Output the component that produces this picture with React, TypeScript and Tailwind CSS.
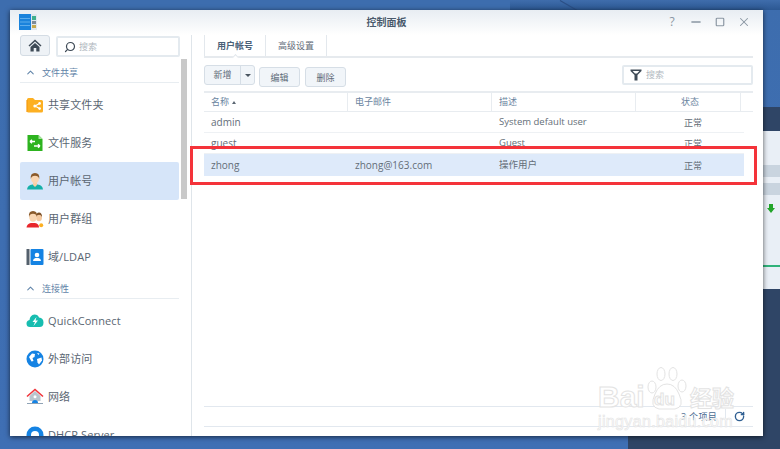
import type { ReactNode } from "react";
import { ChevronUp, Minus, RotateCw, Search, Square, X } from "lucide-react";

const FolderIcon = () => (
  <svg viewBox="0 0 18 18" className="w-[18px] h-[18px]">
    <path d="M1 3.5 Q1 2 2.5 2 H7 L9 4 H15.5 Q17 4 17 5.5 V15 Q17 16.5 15.5 16.5 H2.5 Q1 16.5 1 15 Z" fill="#fdb022" />
    <path d="M1 4 V16" stroke="#f59a0c" strokeWidth="1.2" />
    <path d="M9 10 L13.5 7.5 M9 10 L13.5 12.5" stroke="#fff" strokeWidth="1.1" />
    <circle cx="8.8" cy="10" r="1.5" fill="#fff" />
    <circle cx="13.6" cy="7.4" r="1.3" fill="#fff" />
    <circle cx="13.6" cy="12.6" r="1.3" fill="#fff" />
  </svg>
);

const FileServiceIcon = () => (
  <svg viewBox="0 0 18 18" className="w-[18px] h-[18px]">
    <path d="M1.5 1 H12.5 L16.5 5 V17 H1.5 Z" fill="#2db31f" />
    <path d="M12.5 1 V5 H16.5 Z" fill="#a5e29c" />
    <path d="M4 7.5 H9 M4 7.5 L6 5.8 M4 7.5 L6 9.2" stroke="#fff" strokeWidth="1.4" fill="none" />
    <path d="M14 12 H8 M14 12 L12 10.3 M14 12 L12 13.7" stroke="#fff" strokeWidth="1.4" fill="none" />
  </svg>
);

const UserIcon = () => (
  <svg viewBox="0 0 18 18" className="w-[18px] h-[18px]">
    <path d="M1 17.5 Q1.5 13 6.5 12.5 H11.5 Q16.5 13 17 17.5 Z" fill="#14b0a8" />
    <path d="M7 10 H11 V13 L9 15 L7 13 Z" fill="#f7cfa6" />
    <ellipse cx="9" cy="6.5" rx="4" ry="5" fill="#f9d6b2" />
    <path d="M4.8 7 Q4 1 9 1 Q14 1 13.2 7 Q12.5 3.8 9 3.8 Q5.5 3.8 4.8 7 Z" fill="#8a5a2b" />
  </svg>
);

const GroupIcon = () => (
  <svg viewBox="0 0 18 18" className="w-[18px] h-[18px]">
    <ellipse cx="13" cy="7.5" rx="3" ry="3.8" fill="#f4c9a0" />
    <path d="M10 7 Q10 2.5 13 2.5 Q16 2.5 16 7 Q15 4.8 13 4.8 Q11 4.8 10 7 Z" fill="#7b4f26" />
    <path d="M0.5 17.5 Q1 13.5 5 13 H9 Q13 13.5 13 17.5 Z" fill="#e8272c" />
    <ellipse cx="7" cy="7" rx="3.9" ry="4.8" fill="#f9d6b2" />
    <path d="M3 7 Q2.2 1 7 1 Q11.8 1 11 7 Q10.3 3.8 7 3.8 Q3.7 3.8 3 7 Z" fill="#8a5a2b" />
    <circle cx="15.2" cy="15.2" r="2" fill="#fdb022" />
  </svg>
);

const LdapIcon = () => (
  <svg viewBox="0 0 18 18" className="w-[18px] h-[18px]">
    <rect x="0.5" y="1" width="3" height="16" fill="#54606c" />
    <rect x="4.5" y="1" width="13" height="16" rx="1" fill="#1583e3" />
    <circle cx="11" cy="7" r="2.3" fill="#fff" />
    <path d="M7 13 Q7 10.4 9.5 10 H12.5 Q15 10.4 15 13 Z" fill="#fff" />
  </svg>
);

const QuickConnectIcon = () => (
  <svg viewBox="0 0 18 18" className="w-[18px] h-[18px]">
    <path d="M4 15 Q0.5 15 0.5 11.5 Q0.5 8.5 3.5 8 Q4 3 8.5 2.5 Q12 2.5 13 5.5 Q17.5 6 17.5 10.5 Q17.5 15 13.5 15 Z" fill="#17bdb0" />
    <path d="M10.5 5 L6.5 10 H9 L7.5 14 L12 8.5 H9.5 Z" fill="#fff" />
  </svg>
);

const GlobeIcon = () => (
  <svg viewBox="0 0 18 18" className="w-[18px] h-[18px]">
    <circle cx="9" cy="9" r="8.5" fill="#1583e3" />
    <path d="M3 7 L6 3.5 L9 4 L8.5 7 L6.5 8 L7.5 11 L5.5 11.5 Z" fill="#fff" />
    <path d="M11 9 L15.5 7.5 L16 10.5 L13 14.5 L11.5 12.5 Z" fill="#fff" />
    <path d="M11 3 L13.5 3.5 L12.5 5 Z" fill="#fff" />
  </svg>
);

const NetworkIcon = () => (
  <svg viewBox="0 0 18 18" className="w-[18px] h-[18px]">
    <path d="M3.5 8 L9 3 L14.5 8 V13 H3.5 Z" fill="#b9c4ce" />
    <path d="M1 8.5 L9 1.5 L17 8.5" fill="none" stroke="#f0353b" strokeWidth="1.6" />
    <circle cx="9" cy="8.8" r="1.5" fill="#fff" />
    <path d="M6 15 Q6 12 9 12 Q12 12 12 15 Z" fill="#1583e3" />
    <path d="M1 15.5 H17" stroke="#8fa3b5" strokeWidth="1" />
  </svg>
);

const DhcpIcon = () => (
  <svg viewBox="0 0 18 18" className="w-[18px] h-[18px]">
    <circle cx="9" cy="9" r="8.5" fill="#1583e3" />
    <circle cx="9" cy="9" r="4" fill="#fff" />
  </svg>
);

type NavItem = { label: string; icon: ReactNode; active?: boolean };

const shareItems: NavItem[] = [
  { label: "共享文件夹", icon: <FolderIcon /> },
  { label: "文件服务", icon: <FileServiceIcon /> },
  { label: "用户帐号", icon: <UserIcon />, active: true },
  { label: "用户群组", icon: <GroupIcon /> },
  { label: "域/LDAP", icon: <LdapIcon /> },
];

const connectItems: NavItem[] = [
  { label: "QuickConnect", icon: <QuickConnectIcon /> },
  { label: "外部访问", icon: <GlobeIcon /> },
  { label: "网络", icon: <NetworkIcon /> },
  { label: "DHCP Server", icon: <DhcpIcon /> },
];

const rows = [
  { name: "admin", email: "", desc: "System default user", selected: false },
  { name: "guest", email: "", desc: "Guest", selected: false },
  { name: "zhong", email: "zhong@163.com", desc: "操作用户", selected: true },
];

function NavRow({ item }: { item: NavItem }) {
  return (
    <div
      className={`flex items-center gap-[4px] h-[38px] pl-[6px] shrink-0 rounded-[2px] text-[11px] tracking-[0.1px] text-[#5a6672] ${
        item.active ? "bg-[#d6e5f9] text-[#4d6a8c]" : ""
      }`}
    >
      {item.icon}
      <span>{item.label}</span>
    </div>
  );
}

function SectionHeader({ label }: { label: string }) {
  return (
    <div className="flex items-center gap-[6px] h-[23px] pt-[3px] pl-[5px] border-b border-[#e8edf1] text-[9px] text-[#5f83a8] shrink-0">
      <ChevronUp className="w-[11px] h-[11px]" strokeWidth={2.2} />
      <span>{label}</span>
    </div>
  );
}

function ToolButton({ label }: { label: string }) {
  return (
    <button className="w-[41px] h-[20px] rounded-[3px] border border-[#d6dee6] bg-[#f1f5f9] text-[9px] text-[#5f6b78]">
      {label}
    </button>
  );
}

export default function App() {
  return (
    <div className="relative w-[780px] h-[449px] overflow-hidden bg-gradient-to-b from-[#3d6dae] to-[#3f6fb4] font-['Open_Sans','Noto_Sans_CJK_SC',sans-serif]">
      {/* Desktop behind the window */}
      <div className="absolute right-0 top-0 w-[270px] h-[10px] bg-gradient-to-b from-[#3f6dac] to-[#2c5893]" />
      <div className="absolute left-[560px] top-0 w-[24px] h-[1px] rotate-[30deg] origin-left bg-[#2b4f85]" />
      <div className="absolute left-[628px] top-[107px] w-[152px] h-[342px] bg-[#2f4566] flex flex-col pt-[24px]">
        <div className="h-[158px] bg-[#e9eff6] flex flex-col pt-[34px] gap-[6px] pl-[135px]">
          <div className="h-[12px] bg-[#c9d4df]" />
          <div className="h-[12px] bg-[#c9d4df]" />
          <svg viewBox="0 0 8 9" className="mt-[3px] ml-[4px] w-[8px] h-[9px]">
            <path d="M2 0 H6 V4 H8 L4 9 L0 4 H2 Z" fill="#22a52a" />
          </svg>
          <div className="mt-auto h-[2px] bg-[#30b27a]" />
          <div className="h-[16px]" />
        </div>
      </div>

      {/* Control panel window */}
      <div className="absolute left-[10px] top-[10px] w-[753px] h-[426px] bg-white flex flex-col overflow-hidden shadow-[0_1px_5px_rgba(0,0,0,0.65)]">
        <div className="relative h-[25px] shrink-0 flex items-center justify-center bg-gradient-to-b from-[#e8edf2] to-white text-[10px] font-semibold text-[#4a5a6c]">
          <svg viewBox="0 0 18 17" className="absolute left-[9px] top-[4px] w-[18px] h-[17px]">
            <rect x="0" y="0" width="12" height="16" fill="#1a83dc" />
            <path d="M1 4.5 H11 M1 8 H11 M1 11.5 H11" stroke="#7cc0f2" strokeWidth="0.7" />
            <rect x="12" y="0" width="6" height="16" fill="#dfe7ee" />
            <rect x="13" y="2" width="4" height="4" fill="#3fae8e" />
            <rect x="13" y="7" width="4" height="3" fill="#7d8b99" />
            <rect x="13" y="11" width="4" height="3" fill="#c5a94e" />
          </svg>
          控制面板
          <div className="absolute right-[12px] top-[5px] flex items-center gap-[10px] text-[#8a96a2]">
            <span className="w-[14px] text-center text-[12px] leading-none font-normal">?</span>
            <Minus className="w-[14px] h-[14px]" strokeWidth={2.4} />
            <Square className="w-[14px] h-[14px] p-[2px]" strokeWidth={2.8} />
            <X className="w-[14px] h-[14px]" strokeWidth={1.8} />
          </div>
        </div>

        <div className="flex-1 flex min-h-0">
          {/* Sidebar */}
          <aside className="w-[182px] shrink-0 flex flex-col border-r border-[#dfe5ea]">
            <div className="flex pl-[10px] gap-[6px] h-[24px] shrink-0">
              <button className="w-[30px] h-[21px] flex items-center justify-center rounded-[3px] border border-[#d4dce4] bg-[#eef2f6]">
                <svg viewBox="0 0 14 13" className="w-[14px] h-[13px]">
                  <path d="M7 0.5 L0.5 6.5 L1.5 7.5 L7 2.6 L12.5 7.5 L13.5 6.5 Z" fill="#3e4a56" />
                  <path d="M2.5 8 L7 4 L11.5 8 V12.5 H8.3 V9 H5.7 V12.5 H2.5 Z" fill="#3e4a56" />
                </svg>
              </button>
              <div className="mt-[1px] w-[124px] h-[21px] flex items-center gap-[3px] pl-[6px] border-2 border-[#e4eaef] rounded-[2px] text-[9px] text-[#b0b8c0]">
                <Search className="w-[12px] h-[12px] text-[#3e4a56] -scale-x-100" strokeWidth={2.4} />
                搜索
              </div>
            </div>
            <div className="flex-1 flex min-h-0 pl-[10px]">
              <div className="w-[159px] shrink-0 flex flex-col overflow-hidden pt-[1px]">
                <SectionHeader label="文件共享" />
                <div className="h-[3px] shrink-0" />
                {shareItems.map((item) => (
                  <NavRow key={item.label} item={item} />
                ))}
                <SectionHeader label="连接性" />
                <div className="h-[3px] shrink-0" />
                {connectItems.map((item) => (
                  <NavRow key={item.label} item={item} />
                ))}
              </div>
              <div className="ml-[2px] w-[6px] shrink-0">
                <div className="h-[140px] bg-[#c9c9c9]" />
              </div>
            </div>
          </aside>

          {/* Main content */}
          <main className="flex-1 min-w-0 flex flex-col pl-[12px] pr-[10px] pb-[9px]">
            <div className="flex h-[23px] shrink-0 border-b-2 border-[#e6eaee] text-[9px]">
              <div className="relative w-[62px] flex items-center justify-center border-l border-r border-[#e3e8ed] font-semibold text-[#4a6078]">
                用户帐号
                <span className="absolute left-[28px] -bottom-[4px] w-[5px] h-[5px] rotate-45 bg-white border-l border-t border-[#e3e8ed]" />
              </div>
              <div className="w-[61px] flex items-center justify-center border-r border-[#e3e8ed] text-[#5f6b78]">
                高级设置
              </div>
            </div>

            <div className="flex items-center h-[20px] mt-[7px] shrink-0">
              <div className="flex h-[20px] w-[51px] rounded-[3px] border border-[#d6dee6] bg-[#f1f5f9] text-[9px] text-[#5f6b78]">
                <span className="w-[36px] flex items-center justify-center border-r border-[#d6dee6]">新增</span>
                <span className="flex-1 flex items-center justify-center">
                  <span className="border-x-[3px] border-x-transparent border-t-[3px] border-t-[#4a5560]" />
                </span>
              </div>
              <div className="ml-[4px]">
                <ToolButton label="编辑" />
              </div>
              <div className="ml-[5px]">
                <ToolButton label="删除" />
              </div>
              <div className="ml-auto w-[131px] h-[20px] flex items-center gap-[4px] pl-[6px] border-2 border-[#e4eaef] rounded-[2px] text-[9px] text-[#b0b8c0]">
                <svg viewBox="0 0 12 12" className="w-[12px] h-[12px]">
                  <path d="M0.5 0.5 H11.5 V2 L7.5 6 V11.5 H4.5 V6 L0.5 2 Z" fill="#3e4a56" />
                  <path d="M2.6 2 H9.4 L7 4.4 H5 Z" fill="#fff" />
                </svg>
                搜索
              </div>
            </div>

            <div className="mt-[6px] flex h-[21px] shrink-0 border-t-2 border-b border-[#e8ecf0] text-[9px] text-[#6a84a0]">
              <div className="w-[144px] flex items-center gap-[3px] pl-[7px] border-r border-[#e8ecf0]">
                名称
                <span className="border-x-[2px] border-x-transparent border-b-[3px] border-b-[#5a6672]" />
              </div>
              <div className="w-[144px] flex items-center pl-[7px] border-r border-[#e8ecf0]">电子邮件</div>
              <div className="w-[144px] flex items-center pl-[7px] border-r border-[#e8ecf0]">描述</div>
              <div className="w-[105px] flex items-center pl-[45px] border-r border-[#e8ecf0]">状态</div>
            </div>

            <div className="w-[540px] flex flex-col shrink-0">
              {rows.map((row) => (
                <div
                  key={row.name}
                  className={`grid grid-cols-[144px_144px_144px_108px] items-center pt-[1px] text-[10px] text-[#646e78] ${
                    row.selected ? "h-[22px] bg-[#deeafa]" : "h-[21px] border-b border-[#eef1f4]"
                  }`}
                >
                  <span className="pl-[7px]">{row.name}</span>
                  <span className="pl-[7px]">{row.email}</span>
                  <span className="pl-[7px] text-[9.5px]">{row.desc}</span>
                  <span className="pl-[48px] text-[9px]">正常</span>
                </div>
              ))}
            </div>

            <div className="mt-auto flex items-center justify-end h-[21px] shrink-0 border-t border-b border-[#e2e8ef]">
              <span className="text-[9px] text-[#4a6a90] tracking-[0.3px]">3 个项目</span>
              <span className="ml-[8px] w-px h-[16px] bg-[#e2e8ef]" />
              <RotateCw className="ml-[8px] mr-[8px] w-[11px] h-[11px] text-[#2f5f92]" strokeWidth={3} />
            </div>
          </main>
        </div>
      </div>

      {/* Red annotation round the new user */}
      <div className="absolute left-[190px] top-[146px] w-[567px] h-[39px] border-[3px] border-[#f4333a]" />

      {/* Baidu watermark */}
      <div className="absolute left-[598px] top-[366px] w-[142px] h-[68px] font-['Liberation_Sans',sans-serif] text-white whitespace-nowrap [-webkit-text-stroke:1px_#e3e3e3]">
        <div className="flex items-end h-[46px]">
          <span className="w-[47px] shrink-0 text-[30px] leading-[30px] font-bold">Bai</span>
          <svg viewBox="0 0 44 44" className="w-[44px] h-[44px] self-start shrink-0">
            <g fill="#fff" stroke="#e3e3e3" strokeWidth="1">
              <ellipse cx="7" cy="21" rx="4" ry="6" />
              <ellipse cx="16" cy="8" rx="4" ry="6.5" />
              <ellipse cx="28" cy="8" rx="4" ry="6.5" />
              <ellipse cx="37" cy="20" rx="4" ry="6" />
              <path d="M22 18 Q30 18 34 28 Q40 41 30 43 H14 Q4 41 10 28 Q14 18 22 18 Z" />
            </g>
          </svg>
          <span className="absolute left-[56px] top-[25px] text-[17px] leading-[17px] font-bold">du</span>
          <span className="ml-[1px] mb-[3px] text-[22px] leading-[26px] font-['Noto_Sans_CJK_SC',sans-serif] font-bold">经验</span>
        </div>
        <div className="text-[16px] leading-[20px] tracking-[0.35px] [-webkit-text-stroke:0.6px_#e3e3e3]">
          jingyan.baidu.com
        </div>
      </div>
    </div>
  );
}
